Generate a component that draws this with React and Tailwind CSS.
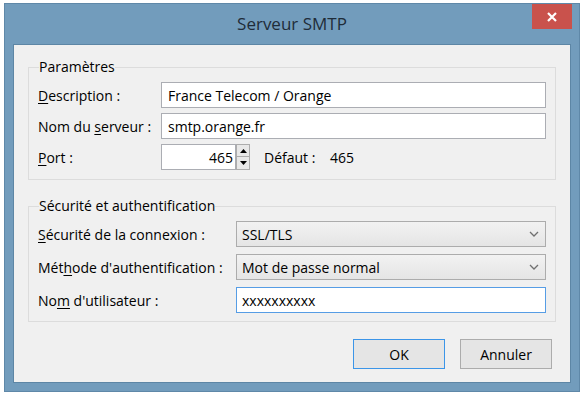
import React from "react";

function U({ children }) {
    return <span className="underline underline-offset-[2px]">{children}</span>;
}

function Chevron() {
    return (
        <svg width="10" height="6" viewBox="0 0 10 6" className="text-[#707070]">
            <path d="M1 1 L5 5 L9 1" fill="none" stroke="currentColor" strokeWidth="1.3" />
        </svg>
    );
}

function Select({ value }) {
    return (
        <div className="flex h-[26px] flex-1 items-center justify-between border border-[#acacac] bg-gradient-to-b from-[#f2f2f2] to-[#e5e5e5] pl-[5px] pr-[6px]">
            <span>{value}</span>
            <Chevron />
        </div>
    );
}

function Spinner() {
    return (
        <div className="flex h-[26px] w-[14px] flex-col">
            <div className="flex h-[13px] items-center justify-center border border-[#acacac] bg-[#e8e8e8]">
                <svg width="7" height="4" viewBox="0 0 7 4">
                    <path d="M0 4 L3.5 0 L7 4 Z" fill="#000" />
                </svg>
            </div>
            <div className="flex h-[13px] items-center justify-center border border-t-0 border-[#acacac] bg-[#e8e8e8]">
                <svg width="7" height="4" viewBox="0 0 7 4">
                    <path d="M0 0 L3.5 4 L7 0 Z" fill="#000" />
                </svg>
            </div>
        </div>
    );
}

export default function App() {
    return (
        <div
            className="relative h-[393px] w-[583px] overflow-hidden bg-white text-[14px] text-black"
            style={{ fontFamily: '"Open Sans", "Noto Sans", sans-serif' }}
        >
            <div className="ml-[4px] mt-[3px] flex h-[389px] w-[576px] flex-col border border-[#5f88a8] bg-[#729cbc] px-[8px] pb-[8px]">
                {/* barre de titre */}
                <div className="relative flex h-[40px] items-center justify-center">
                    <span className="text-[17px] text-[#1f2c39]">Serveur SMTP</span>
                    <div className="absolute right-[-1px] top-0 flex h-[25px] w-[40px] items-center justify-center bg-[#c9524c]">
                        <svg width="10" height="10" viewBox="0 0 10 10">
                            <path d="M1 1 L9 9 M9 1 L1 9" stroke="#fff" strokeWidth="2.2" />
                        </svg>
                    </div>
                </div>

                <div className="flex flex-1 flex-col border border-[#5d86a5] bg-[#f0f0f0] px-[14px] pt-[12px]">
                    <fieldset className="border border-[#dcdcdc] px-[9px] pb-[9px] pt-[5px]">
                        <legend className="ml-[1px] px-[0px] leading-[20px]">Paramètres</legend>
                        <div className="flex flex-col gap-[5px]">
                            <div className="flex items-center">
                                <span className="w-[123px]">
                                    <U>D</U>escription :
                                </span>
                                <div className="flex h-[26px] flex-1 items-center border border-[#abadb3] bg-white px-[6px]">
                                    France Telecom / Orange
                                </div>
                            </div>
                            <div className="flex items-center">
                                <span className="w-[123px]">
                                    Nom du <U>s</U>erveur :
                                </span>
                                <div className="flex h-[26px] flex-1 items-center border border-[#abadb3] bg-white px-[6px]">
                                    smtp.orange.fr
                                </div>
                            </div>
                            <div className="flex items-center">
                                <span className="w-[123px]">
                                    <U>P</U>ort :
                                </span>
                                <div className="flex h-[26px] w-[75px] items-center justify-end border border-[#abadb3] bg-white px-[2px]">
                                    465
                                </div>
                                <Spinner />
                                <span className="ml-[14px] w-[66px]">Défaut :</span>
                                <span>465</span>
                            </div>
                        </div>
                    </fieldset>

                    <fieldset className="mt-[16px] border border-[#dcdcdc] px-[9px] pb-[8px] pt-[5px]">
                        <legend className="ml-[1px] leading-[20px]">Sécurité et authentification</legend>
                        <div className="flex flex-col gap-[7px]">
                            <div className="flex items-center">
                                <span className="w-[198px]">
                                    <U>S</U>écurité de la connexion :
                                </span>
                                <Select value="SSL/TLS" />
                            </div>
                            <div className="flex items-center">
                                <span className="w-[198px]">
                                    Mét<U>h</U>ode d'authentification :
                                </span>
                                <Select value="Mot de passe normal" />
                            </div>
                            <div className="flex items-center">
                                <span className="w-[198px]">
                                    No<U>m</U> d'utilisateur :
                                </span>
                                <div className="flex h-[26px] flex-1 items-center border border-[#569de5] bg-white px-[5px]">
                                    xxxxxxxxxx
                                </div>
                            </div>
                        </div>
                    </fieldset>

                    <div className="mt-[17px] flex justify-end gap-[15px] pr-[4px]">
                        <button className="h-[30px] w-[92px] border border-[#3c95e8] bg-[#e5e5e5]">OK</button>
                        <button className="h-[30px] w-[92px] border border-[#acacac] bg-[#e5e5e5]">Annuler</button>
                    </div>
                </div>
            </div>
        </div>
    );
}
